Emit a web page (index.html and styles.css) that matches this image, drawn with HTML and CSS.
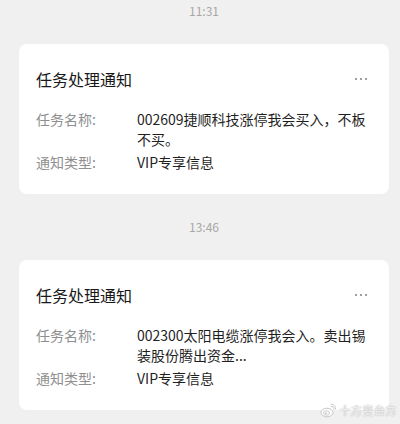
FILE: index.html
```html
<!DOCTYPE html>
<html lang="zh-CN">
<head>
    <meta charset="UTF-8">
    <meta name="viewport" content="width=device-width, initial-scale=1.0">
    <title>任务处理通知</title>
    <link rel="stylesheet" href="styles.css">
</head>
<body>
    <div class="chat">
        <div class="time first">11:31</div>
        <div class="card">
            <div class="card-head">
                <div class="card-title">任务处理通知</div>
                <div class="more"><i></i><i></i><i></i></div>
            </div>
            <div class="row">
                <div class="label">任务名称:</div>
                <div class="value">002609捷顺科技涨停我会买入，不板不买。</div>
            </div>
            <div class="row">
                <div class="label">通知类型:</div>
                <div class="value">VIP专享信息</div>
            </div>
        </div>

        <div class="time">13:46</div>
        <div class="card">
            <div class="card-head">
                <div class="card-title">任务处理通知</div>
                <div class="more"><i></i><i></i><i></i></div>
            </div>
            <div class="row">
                <div class="label">任务名称:</div>
                <div class="value">002300太阳电缆涨停我会入。卖出锡装股份腾出资金...</div>
            </div>
            <div class="row">
                <div class="label">通知类型:</div>
                <div class="value">VIP专享信息</div>
            </div>
        </div>
    </div>

    <!-- 水印 -->
    <div class="watermark">
        <svg width="16" height="15" viewBox="0 0 16 15">
            <ellipse cx="7" cy="9.5" rx="6.2" ry="4.3" fill="#fafafa" stroke="#c8c8c8" stroke-width="1"/>
            <ellipse cx="6.5" cy="10" rx="3" ry="2.2" fill="none" stroke="#c8c8c8" stroke-width="0.9"/>
            <circle cx="6" cy="10.2" r="0.9" fill="#c8c8c8"/>
            <path d="M10.5 3.2 A3.2 3.2 0 0 1 14 6.6" fill="none" stroke="#c8c8c8" stroke-width="1"/>
            <path d="M10.8 1 A5.4 5.4 0 0 1 15.6 6.4" fill="none" stroke="#c8c8c8" stroke-width="1"/>
        </svg>
        <span>十方变台方</span>
    </div>
</body>
</html>
```

FILE: styles.css
```css
body {
    margin: 0;
    width: 400px;
    height: 424px;
    overflow: hidden;
    background-color: #f0f0f0;
    font-family: "Noto Sans CJK SC", sans-serif;
    position: relative;
}
.chat {
    margin: 0 11px 0 19px;
}
.time {
    padding: 25px 0;
    line-height: 16px;
    font-size: 12px;
    color: #a8a8a8;
    text-align: center;
}
.time.first {
    padding-top: 3px;
}
.card {
    background-color: #fff;
    border-radius: 8px;
    padding: 25px 20px 22px 17px;
}
.card-head {
    display: flex;
    justify-content: space-between;
    align-items: center;
    margin-bottom: 20px;
}
.card-title {
    font-size: 16px;
    line-height: 20px;
    color: #191919;
}
.more {
    display: flex;
    gap: 3px;
    margin-right: 2px;
}
.more i {
    width: 2px;
    height: 2px;
    background-color: #a0a0a0;
}
.row {
    display: grid;
    grid-template-columns: 101px 1fr;
    font-size: 14px;
    line-height: 20px;
}
.row + .row {
    margin-top: 3px;
}
.label {
    color: #8f8f8f;
}
.value {
    color: #1f1f1f;
}
.watermark {
    position: absolute;
    right: 3px;
    bottom: 6px;
    display: flex;
    align-items: center;
    gap: 4px;
}
.watermark span {
    font-size: 11px;
    color: #f4f4f4;
    text-shadow: 0 0 1px #b0b0b0, 0 0 2px #c0c0c0;
    letter-spacing: 0.5px;
}
```
